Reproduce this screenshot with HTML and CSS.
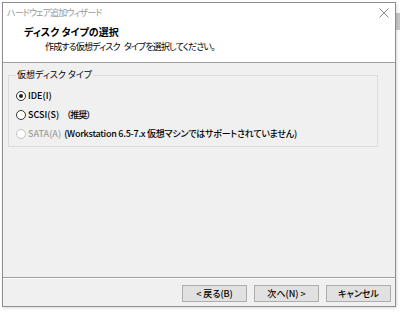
FILE: index.html
```html
<!DOCTYPE html>
<html lang="ja">
<head>
    <meta charset="UTF-8">
    <title>ハードウェア追加ウィザード</title>
    <link rel="stylesheet" href="styles.css">
</head>
<body>
    <!-- 後ろのウィンドウの一部 -->
    <div class="behind-scroll"></div>

    <div class="dialog">
        <div class="titlebar">
            <span class="title-text">ハードウェア追加ウィザード</span>
            <span class="close-btn">
                <svg width="10" height="10" viewBox="0 0 10 10">
                    <path d="M0.5 0.5 L9.5 9.5 M9.5 0.5 L0.5 9.5" stroke="#8a8a8a" stroke-width="1" fill="none"/>
                </svg>
            </span>
        </div>

        <div class="header">
            <div class="header-title">ディスク タイプの選択</div>
            <div class="header-sub">作成する仮想ディスク タイプを選択してください。</div>
        </div>

        <div class="main">
            <fieldset class="group">
                <legend>仮想ディスク タイプ</legend>
                <div class="radio-row">
                    <span class="radio checked"></span>
                    <span class="radio-label">IDE(I)</span>
                </div>
                <div class="radio-row">
                    <span class="radio"></span>
                    <span class="radio-label">SCSI(S)</span>
                    <span class="note wide">（推奨）</span>
                </div>
                <div class="radio-row">
                    <span class="radio disabled"></span>
                    <span class="radio-label disabled">SATA(A)</span>
                    <span class="note">(Workstation 6.5-7.x 仮想マシンではサポートされていません)</span>
                </div>
            </fieldset>
        </div>

        <div class="footer">
            <button class="btn">&lt; 戻る(B)</button>
            <button class="btn next">次へ(N) &gt;</button>
            <button class="btn cancel">キャンセル</button>
        </div>
    </div>
</body>
</html>
```

FILE: styles.css
```css
body {
    margin: 0;
    width: 400px;
    height: 313px;
    background-color: #ffffff;
    font-family: "Noto Sans CJK JP", "Noto Sans", sans-serif;
    font-feature-settings: "palt";
    font-size: 9px;
    color: #000;
    position: relative;
    overflow: hidden;
}

/* 後ろのウィンドウのスクロールバー */
.behind-scroll {
    position: absolute;
    left: 396px;
    top: 13px;
    width: 4px;
    height: 17px;
    background-color: #c8c8c8;
}

/* ダイアログ本体 */
.dialog {
    margin: 2px 0 0 2px;
    width: 394px;
    height: 305px;
    box-sizing: border-box;
    border: 1px solid #8e8e8e;
    background-color: #f0f0f0;
    box-shadow: 1px 1px 3px rgba(0, 0, 0, 0.15);
    display: flex;
    flex-direction: column;
    position: relative;
}

.titlebar {
    height: 19px;
    background-color: #fff;
    display: flex;
    align-items: center;
    justify-content: space-between;
    padding: 0 4px 0 4px;
}

.title-text {
    color: #9a9a9a;
    font-size: 9px;
    letter-spacing: -0.9px;
}

.close-btn {
    display: flex;
    width: 10px;
    height: 10px;
    margin-right: 2px;
}

/* ヘッダー部分 */
.header {
    height: 41px;
    background-color: #fff;
    border-bottom: 1px solid #a0a0a0;
    padding: 3px 0 0 21px;
    box-sizing: border-box;
}

.header-title {
    font-weight: bold;
    font-size: 10px;
    line-height: 14px;
    height: 15px;
}

.header-sub {
    line-height: 14px;
    padding-left: 21px;
    letter-spacing: -0.85px;
    word-spacing: 3px;
}

.main {
    flex: 1;
    padding: 6px 17px 0 5px;
}

.group {
    margin: 0;
    border: 1px solid #dcdcdc;
    padding: 5px 0 4px 7px;
    height: 78px;
    box-sizing: border-box;
}

.group legend {
    padding: 0 1px;
    margin-left: 0;
    line-height: 12px;
}

.radio-row {
    display: flex;
    align-items: center;
    height: 19px;
}

.radio {
    width: 10px;
    height: 10px;
    box-sizing: border-box;
    border: 1px solid #333;
    border-radius: 50%;
    background-color: #fff;
    margin-right: 2px;
    position: relative;
}

.radio.checked::after {
    content: "";
    position: absolute;
    left: 2px;
    top: 2px;
    width: 4px;
    height: 4px;
    border-radius: 50%;
    background-color: #222;
}

.radio.disabled {
    border-color: #c4c4c4;
}

.radio-label {
    font-weight: 500;
}

.radio-label.disabled {
    color: #a0a0a0;
}

.note {
    margin-left: 3px;
    font-weight: 500;
    letter-spacing: -0.25px;
}

.note.wide {
    margin-left: 3px;
    font-feature-settings: normal;
    letter-spacing: -1px;
}

/* ボタン部分 */
.footer {
    height: 29px;
    border-top: 1px solid #a0a0a0;
    box-shadow: inset 0 1px 0 #fff;
    display: flex;
    align-items: flex-start;
    justify-content: flex-end;
    padding: 7px 4px 0 0;
    gap: 7px;
    box-sizing: border-box;
}

.btn {
    width: 65px;
    height: 17px;
    padding: 0;
    background-color: #e1e1e1;
    border: 1px solid #adadad;
    font-family: inherit;
    font-feature-settings: "palt";
    font-size: 9px;
    font-weight: 500;
    color: #000;
    line-height: 15px;
}
```
